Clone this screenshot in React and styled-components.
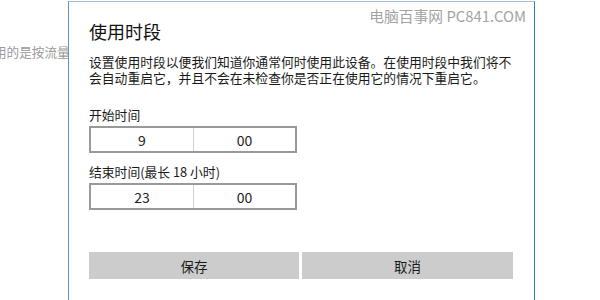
import React from "react";
import styled, { createGlobalStyle } from "styled-components";

const GlobalStyle = createGlobalStyle`
  html, body {
    margin: 0;
    padding: 0;
    background: #fff;
    overflow: hidden;
  }
  body {
    font-family: "Noto Sans CJK SC", "Noto Sans", sans-serif;
  }
`;

const Page = styled.div`
  width: 600px;
  height: 300px;
  display: flex;
  overflow: hidden;
`;

const Behind = styled.div`
  width: 68px;
  flex-shrink: 0;
  overflow: hidden;
  padding-top: 43px;
`;

const BehindText = styled.div`
  margin-left: -6px;
  white-space: nowrap;
  font-size: 12.6px;
  line-height: 18px;
  color: #9a9a9a;
`;

const Dialog = styled.div`
  position: relative;
  margin-top: 1px;
  width: 467px;
  height: 320px;
  flex-shrink: 0;
  border: 1px solid #2f7dba;
  border-top-color: #9fbfd8;
  border-left-color: #5f93bd;
  border-bottom: none;
  padding: 17px 14px 0 20px;
  box-sizing: border-box;
  display: flex;
  flex-direction: column;
  color: #1a1a1a;
`;

const Watermark = styled.div`
  position: absolute;
  top: 4px;
  right: 8px;
  font-size: 14.8px;
  line-height: 20px;
  color: #a3a3a3;
  white-space: nowrap;
`;

const Title = styled.h1`
  margin: 0;
  font-size: 18px;
  font-weight: 400;
  line-height: 24px;
  color: #111;
`;

const Description = styled.p`
  margin: 11px 0 0;
  font-size: 12.8px;
  line-height: 16px;
  color: #1a1a1a;
`;

const Label = styled.div`
  margin-top: ${(p) => p.$gap}px;
  margin-bottom: 2px;
  font-size: 12.8px;
  line-height: 18px;
  color: #1a1a1a;
`;

const TimeBox = styled.div`
  width: 208px;
  height: 27px;
  box-sizing: border-box;
  border: 2px solid #999;
  display: grid;
  grid-template-columns: 1fr 1fr;
`;

const TimeCell = styled.div`
  display: flex;
  align-items: center;
  justify-content: center;
  font-size: 14px;
  color: #222;
  & + & {
    border-left: 1px solid #cfcfcf;
  }
`;

const Actions = styled.div`
  margin-top: 42px;
  display: grid;
  grid-template-columns: 210px 211px;
  column-gap: 3px;
`;

const Button = styled.button`
  height: 27px;
  border: none;
  margin: 0;
  padding: 0;
  background: #cccccc;
  font-family: inherit;
  font-size: 13.5px;
  color: #1a1a1a;
`;

function TimeField({ label, gap, hour, minute }) {
  return (
    <>
      <Label $gap={gap}>{label}</Label>
      <TimeBox>
        <TimeCell>{hour}</TimeCell>
        <TimeCell>{minute}</TimeCell>
      </TimeBox>
    </>
  );
}

export default function App() {
  return (
    <>
      <GlobalStyle />
      <Page>
        <Behind>
          <BehindText>用的是按流量</BehindText>
        </Behind>
        <Dialog>
          <Watermark>电脑百事网 PC841.COM</Watermark>
          <Title>使用时段</Title>
          <Description>
            设置使用时段以便我们知道你通常何时使用此设备。在使用时段中我们将不会自动重启它，并且不会在未检查你是否正在使用它的情况下重启它。
          </Description>
          <TimeField label="开始时间" gap={20} hour="9" minute="00" />
          <TimeField label="结束时间(最长 18 小时)" gap={10} hour="23" minute="00" />
          <Actions>
            <Button>保存</Button>
            <Button>取消</Button>
          </Actions>
        </Dialog>
      </Page>
    </>
  );
}
